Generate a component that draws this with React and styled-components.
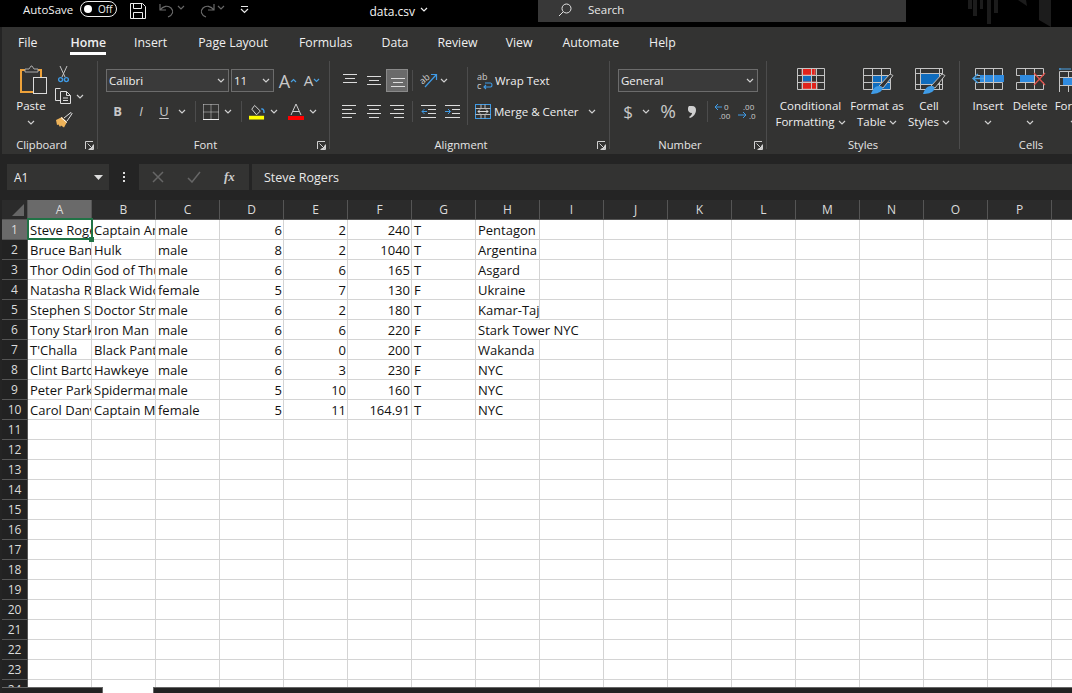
import React from "react";
import styled, { createGlobalStyle } from "styled-components";

const UI = `"Open Sans", "Noto Sans", "Liberation Sans", sans-serif`;

const Global = createGlobalStyle`
  html, body { margin: 0; padding: 0; background: #222; }
  * { box-sizing: border-box; }
`;

const Window = styled.div`
  width: 1072px; height: 693px; overflow: hidden; display: flex; flex-direction: column;
  background: #242424; font-family: ${UI}; color: #ececec; font-size: 12px;
`;
const TitleBar = styled.header`
  flex: none; height: 27px; background: #000; display: flex; align-items: flex-start; overflow: hidden;
`;
const AutoSave = styled.span`margin: 2px 0 0 23px; width: 57px; font-size: 11.5px; line-height: 16px; color: #f2f2f2;`;
const Toggle = styled.span`
  width: 38px; height: 16px; margin-top: 1px; border: 1px solid #eee; border-radius: 8px; display: flex; align-items: center; padding: 0 4px 0 3px; justify-content: space-between;
  font-size: 10px; color: #eee;
  &::before { content: ""; width: 8px; height: 8px; border-radius: 50%; background: #fff; }
`;
const QatSlot = styled.span`flex: none; width: ${p => p.$w}px; margin: ${p => p.$t ?? 3}px 0 0 ${p => p.$l ?? 0}px; display: flex; justify-content: center;`;
const FileName = styled.span`margin: 3px 0 0 ${p => p.$l}px; font-size: 12px; line-height: 17px; color: #f4f4f4;`;
const SearchBox = styled.div`
  flex: none; width: 368px; height: 22px; margin-left: 108px; background: #383838; display: flex; align-items: center; padding: 0 0 3px 20px; gap: 16px; font-size: 11.5px; color: #e8e8e8;
`;
const Deco = styled.svg`flex: none; margin-left: 54px;`;

const Chrome = styled.div`flex: none; margin-left: 2px; background: #333332;`;
const Tabs = styled.nav`display: flex; height: 33px; padding-left: 16px;`;
const Tab = styled.span`
  margin-left: ${p => p.$l}px; height: 28px; padding-top: 7px; line-height: 17px; font-size: 12.3px; white-space: nowrap; color: #efefef;
  font-weight: ${p => p.$on ? 600 : 400};
  border-bottom: ${p => p.$on ? "3px solid #fff" : "none"};
`;
const Ribbon = styled.div`display: flex; height: 94px; padding: 1px 0 5px; overflow: hidden;`;
const Group = styled.section`
  flex: none; width: ${p => p.$w}px; display: flex; flex-direction: column; border-right: 1px solid #4c4c4c;
  &:last-child { border-right: 0; }
`;
const GroupBody = styled.div`flex: none; height: 77px; padding-left: ${p => p.$pad ?? 0}px; display: flex;`;
const Caption = styled.footer`
  flex: none; height: 11px; line-height: 14px; font-size: 11.2px; color: #e6e6e6; text-align: center; position: relative; padding-right: ${p => p.$shift ?? 0}px;
`;
const Launcher = styled.svg`position: absolute; right: 3px; top: 3px;`;
const Stack = styled.div`display: flex; flex-direction: column; padding-top: ${p => p.$top ?? 8}px; width: ${p => p.$w ? p.$w + "px" : "auto"};`;
const Row = styled.div`display: flex; align-items: center; height: 23px; margin-bottom: ${p => p.$gap ?? 8}px;`;
const Slot = styled.span`
  flex: none; display: flex; align-items: center; justify-content: center; height: 23px; width: ${p => p.$w}px; margin-left: ${p => p.$l ?? 0}px;
  background: ${p => p.$on ? "#6a6a6a" : "transparent"}; border: ${p => p.$on ? "1px solid #8a8a8a" : "none"};
`;
const Glyph = styled.span`font-size: ${p => p.$s ?? 13}px; font-weight: ${p => p.$b ? 700 : 400}; font-style: ${p => p.$i ? "italic" : "normal"}; color: #c8c8c8; line-height: 1; font-family: ${UI}; text-decoration: ${p => p.$u ? "underline" : "none"}; text-underline-offset: 2px;`;
const Combo = styled.div`
  flex: none; width: ${p => p.$w}px; height: 23px; margin-left: ${p => p.$l ?? 0}px; background: #3a3a3a; border: 1px solid #6c6c6c; display: flex; align-items: center; justify-content: space-between; padding: 0 3px 0 2px; font-size: 11.5px; color: #f0f0f0;
`;
const RowSep = styled.span`flex: none; width: 1px; height: 21px; background: #4c4c4c; margin-left: ${p => p.$l}px;`;
const TallSep = styled.span`flex: none; width: 1px; height: 58px; margin-top: 6px; background: #4c4c4c;`;
const TextAction = styled.span`font-size: 11.5px; color: #efefef; margin-left: ${p => p.$l}px; white-space: nowrap;`;
const PasteCol = styled.div`flex: none; width: 32px; display: flex; flex-direction: column; align-items: center; padding-top: 3px;`;
const PasteGlyph = styled.span`display: block; margin-left: 8px; height: 31px;`;
const PasteLabel = styled.span`margin-top: 3px; line-height: 16px; font-size: 11.5px; color: #efefef;`;
const PasteChev = styled.span`display: flex; height: 16px; align-items: center;`;
const SmallCol = styled.div`flex: none; display: flex; flex-direction: column; margin-left: 8px; padding-top: 3px;`;
const SmallRow = styled.div`display: flex; align-items: center; height: ${p => p.$h}px; gap: 4px; padding-left: ${p => p.$l ?? 0}px;`;
const Big = styled.div`flex: none; width: ${p => p.$w}px; display: flex; flex-direction: column; align-items: center; padding-top: 7px;`;
const BigIcon = styled.div`height: 23px; margin: 0 0 7px ${p => p.$l ?? 0}px;`;
const BigLabel = styled.span`line-height: 16px; font-size: 11.5px; color: #efefef; white-space: nowrap; display: flex; align-items: center; gap: 3px; height: 16px;`;

const FormulaBar = styled.div`flex: none; display: flex; align-items: stretch; height: 26px; margin: 10px 0 10px 7px;`;
const Box = styled.div`background: #333332; display: flex; align-items: center;`;
const NameBox = styled(Box)`width: 102px; justify-content: space-between; padding: 0 6px 0 7px; font-size: 12px;`;
const Dots = styled.span`width: 30px; display: flex; flex-direction: column; align-items: center; justify-content: center; gap: 2px; i { width: 2px; height: 2px; background: #ddd; display: block; }`;
const FxBox = styled(Box)`width: 110px; padding-left: 13px; gap: 23px;`;
const FxLabel = styled.span`font-family: "Liberation Serif", serif; font-style: italic; font-size: 13px; font-weight: 700; color: #ccc;`;
const Input = styled(Box)`flex: 1; margin-left: 3px; padding-left: 12px; font-size: 12.5px; color: #e8e8e8;`;

const Sheet = styled.div`flex: 1; min-height: 0; margin-left: 2px; overflow: hidden;`;
const GridRow = styled.div`display: grid; grid-template-columns: 26px repeat(17, 64px); height: 20px;`;
const HeadCell = styled.div`
  background: ${p => p.$on ? "#6a6a6a" : "#2b2b2b"}; border-right: 1px solid #555; border-bottom: 1px solid #555; display: flex; align-items: center; justify-content: center; font-size: 12px; color: #dcdcdc; line-height: 1;
`;
const Corner = styled(HeadCell)`position: relative; &::after { content: ""; position: absolute; right: 3px; bottom: 3px; border-style: solid; border-width: 0 0 12px 12px; border-color: transparent transparent #666 transparent; }`;
const RowHead = styled(HeadCell)`background: ${p => p.$on ? "#6a6a6a" : "#222"}; padding-top: 1px;`;
const Cell = styled.div`
  background: #fff; border-right: 1px solid #d4d4d4; border-bottom: 1px solid #d4d4d4; color: #111; font-size: 13px; line-height: 20px; white-space: nowrap; overflow: hidden; padding: 0 1px 0 2px;
  text-align: ${p => p.$num ? "right" : "left"};
  grid-column: span ${p => p.$span ?? 1};
`;
const SelectedFrame = styled.div`
  position: absolute; z-index: 2; left: 25px; top: -2px; width: 66px; height: 22px; border: 2px solid #217346; pointer-events: none;
  &::after { content: ""; position: absolute; right: -3px; bottom: -4px; width: 5px; height: 5px; background: #217346; }
`;
const Body = styled.div`position: relative;`;
const SheetTabs = styled.div`flex: none; height: 6px; background: #fff; display: flex; margin-left: 2px; justify-content: space-between;`;
const TabStrip = styled.span`background: #222; border-top: 1px solid #666; height: 6px; width: ${p => p.$w}px; ${p => p.$side}: 1px solid #666;`;

const Chev = ({ c = "#cfcfcf" }) => <svg width="8" height="5" viewBox="0 0 8 5"><path d="M1 1l3 3 3-3" fill="none" stroke={c} strokeWidth="1.2" /></svg>;
const Lines = ({ rows, w = 16, h = 15 }) => (
  <svg width={w} height={h} viewBox={`0 0 ${w} ${h}`}>
    {rows.map(([a, b, y], i) => <path key={i} d={`M${a} ${y}.5H${b}`} stroke="#dcdcdc" />)}
  </svg>
);
const LaunchIcon = () => <Launcher width="9" height="9" viewBox="0 0 9 9"><path d="M.5 8V.5H8M8.5 3.5v5h-5M2.5 2.5l5 5M4.5 7.5h3v-3" fill="none" stroke="#d0d0d0" /></Launcher>;

const SaveIcon = () => <svg width="16" height="16" viewBox="0 0 16 16"><path d="M.5.5h12l3 3v12H.5zM3.5.5v5h8v-5M3.5 15.5v-6h9v6" fill="none" stroke="#eee" /></svg>;
const Undo = () => <svg width="16" height="15" viewBox="0 0 16 15"><path d="M1 1v6h6M1 7c3-4 8-5 11-2 3 3 2 7-3 9" fill="none" stroke="#6a6a6a" strokeWidth="1.2" /></svg>;
const Redo = () => <svg width="16" height="15" viewBox="0 0 16 15"><path d="M15 1v6H9M15 7C12 3 7 2 4 5c-3 3-2 7 3 9" fill="none" stroke="#6a6a6a" strokeWidth="1.2" /></svg>;
const Customize = () => <svg width="9" height="8" viewBox="0 0 9 8"><path d="M1 .5h7M1 3l3.5 3.5L8 3" fill="none" stroke="#e8e8e8" strokeWidth="1.2" /></svg>;
const SearchIcon = () => <svg width="14" height="14" viewBox="0 0 14 14"><circle cx="8.5" cy="5.5" r="4.5" fill="none" stroke="#e4e4e4" /><path d="M5.2 8.8L1 13" stroke="#e4e4e4" /></svg>;

const PasteIcon = () => (
  <svg width="30" height="31" viewBox="0 0 30 31">
    <path d="M5 6H1v22h12M17 6h4v7" fill="none" stroke="#eea23a" strokeWidth="2" />
    <path d="M5 8V5h4l2-3h1l2 3h4v3z" fill="#333" stroke="#aaa" />
    <rect x="13.5" y="13.5" width="13" height="16" fill="none" stroke="#dcdcdc" />
  </svg>
);
const CutIcon = () => (
  <svg width="11" height="17" viewBox="0 0 11 17">
    <path d="M2 0l5 11M9 0L4 11" stroke="#c4c4c4" fill="none" />
    <circle cx="2.6" cy="13.6" r="2" fill="none" stroke="#3f9be6" strokeWidth="1.4" />
    <circle cx="8.4" cy="13.6" r="2" fill="none" stroke="#3f9be6" strokeWidth="1.4" />
  </svg>
);
const CopyIcon = () => (
  <svg width="17" height="16" viewBox="0 0 17 16">
    <path d="M5 12.5H.5v-12h5" fill="none" stroke="#dedede" />
    <path d="M5.500 3.500h6l4 4v8h-10zM11.500 3.500v4h4M8 10h5M8 12.500h5" fill="none" stroke="#dedede" />
  </svg>
);
const BrushIcon = () => (
  <svg width="18" height="16" viewBox="0 0 18 16">
    <path d="M9 6l5-4 2-1.500 1 1L15.500 4 12 9" fill="#333" stroke="#e4e4e4" />
    <path d="M1 8l6-3 5 5-3 5.500L6 13.500 5 15 3.500 12.500 2 13z" fill="#eeb35a" />
    <path d="M6 5.500l6 5" stroke="#fff" />
  </svg>
);
const BorderIcon = () => (
  <svg width="16" height="16" viewBox="0 0 16 16">
    <path d="M.5.5h15v15M.5.500v15M.5 8h15M8 .5v15" fill="none" stroke="#d4d4d4" strokeDasharray="1 1" />
    <path d="M0 15.500h16" stroke="#eee" />
  </svg>
);
const FillIcon = () => (
  <svg width="17" height="16" viewBox="0 0 17 16">
    <path d="M6 1l6 6-4 4-5-6z" fill="none" stroke="#ddd" />
    <path d="M13 5c2-1 3 1 3 4" fill="none" stroke="#3f9be6" strokeWidth="1.5" />
    <rect x="0" y="12" width="16" height="4" fill="#ffff00" />
  </svg>
);
const ColorIcon = () => (
  <svg width="16" height="16" viewBox="0 0 16 16">
    <path d="M3 11L8 0l5 11M5 7.500h6" fill="none" stroke="#cfcfcf" />
    <rect y="12" width="16" height="4" fill="#ff0000" />
  </svg>
);
const GrowIcon = ({ down }) => (
  <svg width="7" height="5" viewBox="0 0 7 5"><path d={down ? "M1 1l2.500 2.500L6 1" : "M1 4l2.500-2.500L6 4"} fill="none" stroke="#4aa0e0" strokeWidth="1.200" /></svg>
);
const Orient = () => (
  <svg width="18" height="17" viewBox="0 0 18 17">
    <text x="0" y="10" fontSize="9" fill="#ccc" fontFamily="Open Sans" transform="rotate(-40 5 8)">ab</text>
    <path d="M5 15L16 3M11 2.500h5.500V8" fill="none" stroke="#3f9be6" strokeWidth="1.200" />
  </svg>
);
const IndentIcon = ({ right }) => (
  <svg width="15" height="13" viewBox="0 0 15 13">
    <path d="M0 .5h15M7 4.500h8M7 8.500h8M0 12.500h15" stroke="#dcdcdc" />
    {right
      ? <path d="M0 6.500h5M3 4l2.500 2.500L3 9" fill="none" stroke="#3f9be6" />
      : <path d="M6 6.500H1M3.500 4L1 6.500 3.500 9" fill="none" stroke="#3f9be6" />}
  </svg>
);
const WrapIcon = () => (
  <svg width="16" height="18" viewBox="0 0 16 18">
    <text x="0" y="8" fontSize="9" fill="#ccc" fontFamily="Open Sans">ab</text>
    <text x="0" y="17" fontSize="9" fill="#ccc" fontFamily="Open Sans">c</text>
    <path d="M8 11h5.500c2 0 2 4 0 4H7M9 13l-2 2 2 2" fill="none" stroke="#3f9be6" strokeWidth="1.100" />
  </svg>
);
const MergeIcon = () => (
  <svg width="16" height="15" viewBox="0 0 16 15">
    <rect x=".5" y=".5" width="15" height="14" fill="none" stroke="#3f9be6" />
    <path d="M.5 4.500h15M.5 10.500h15M6 .5v4M10 .5v4M6 10.500v4M10 10.500v4" stroke="#bbb" />
    <path d="M3 7.500h10M5 5.500l-2 2 2 2M11 5.500l2 2-2 2" fill="none" stroke="#dcdcdc" />
  </svg>
);
const DecIcon = ({ more }) => (
  <svg width="18" height="17" viewBox="0 0 18 17">
    {more ? <>
      <path d="M8 4H1M4 1L1 4l3 3" fill="none" stroke="#3f9be6" />
      <text x="10" y="7" fontSize="8" fill="#ccc" fontFamily="Open Sans">0</text>
      <text x="5" y="16" fontSize="8" fill="#ccc" fontFamily="Open Sans">.00</text>
    </> : <>
      <text x="5" y="7" fontSize="8" fill="#ccc" fontFamily="Open Sans">.00</text>
      <path d="M0 12h8M5 9l3 3-3 3" fill="none" stroke="#3f9be6" />
      <text x="11" y="16" fontSize="8" fill="#ccc" fontFamily="Open Sans">.0</text>
    </>}
  </svg>
);
const CommaIcon = () => <svg width="8" height="13" viewBox="0 0 8 13"><path d="M1 1h3c3 0 4 2 4 4 0 4-3 7-6 8l-1-1c2-1 3-3 3-4C1 8 0 6 0 4.500 0 3 0 2 1 1z" fill="#cfcfcf" /></svg>;

const G = "#c4c4c4";
const CondIcon = () => (
  <svg width="28" height="22" viewBox="0 0 28 22">
    <rect x="5" y="0" width="13" height="7" fill="#e0231c" stroke="#f46a60" />
    <rect x="5" y="7" width="9" height="7" fill="#0f6cbd" />
    <rect x="5" y="14" width="15" height="7" fill="#e0231c" stroke="#f46a60" />
    <path d="M.5.500h27v21H.5zM.5 7.500h27M.5 14.500h27M5.500.500v21M14.500.500v21M19.500.500v21" fill="none" stroke={G} />
  </svg>
);
const Bristle = () => (
  <g>
    <path d="M16 18L27 6l3 1.500L20 20z" fill="#333" stroke="#bdbdbd" />
    <path d="M8 26c1-3 3-8 8-8 3 0 4 2 3 4-2 3-7 4-11 4z" fill="#3f9be6" />
  </g>
);
const TableIcon = () => (
  <svg width="31" height="26" viewBox="0 0 31 26">
    <rect x="9" y="7" width="19" height="14" fill="#0f6cbd" />
    <path d="M.5.500h27v21H.5zM.5 7.500h27M.5 14.500h27M9.500.500v21M18.500.500v21" fill="none" stroke={G} />
    <Bristle />
  </svg>
);
const CellStyleIcon = () => (
  <svg width="31" height="26" viewBox="0 0 31 26">
    <rect x="5" y="5" width="19" height="12" fill="#0f6cbd" />
    <path d="M.5.500h27v21H.5zM.5 5.500h27M.5 16.500h27M5.500.500v21M24.500.500v21" fill="none" stroke={G} />
    <Bristle />
  </svg>
);
const InsertIcon = () => (
  <svg width="32" height="22" viewBox="0 0 32 22">
    <path d="M3.500.500h27v7h-27zM3.500 14.500h27v7h-27zM12.500.500v21M21.500.500v21" fill="none" stroke={G} />
    <rect x="8" y="7" width="24" height="7" fill="#2f8be0" />
    <path d="M13 10.500H2M6 6l-5 4.500L6 15" fill="none" stroke="#4aa0e0" strokeWidth="1.500" />
    <path d="M12.500 7v7M21.500 7v7" stroke={G} />
  </svg>
);
const DeleteIcon = () => (
  <svg width="30" height="22" viewBox="0 0 30 22">
    <path d="M.5.500h27v7H.5zM.5 14.500h18M27.500 14.500v7H.5v-7M9.500.500v21M18.500.500v21" fill="none" stroke={G} />
    <rect x="4" y="7" width="14" height="7" fill="#2f8be0" />
    <path d="M18 5l11 12M29 5L18 17" stroke="#e0524c" strokeWidth="1.300" />
  </svg>
);
const FormatIcon = () => (
  <svg width="30" height="24" viewBox="0 0 30 24">
    <path d="M0 1h12M1 0v2" stroke="#4aa0e0" />
    <path d="M.5 3.500h27v21H.5zM.5 9.500h27M.5 17.500h27M9.500 3.500v21" fill="none" stroke={G} />
    <rect x="4" y="10" width="24" height="7" fill="#2f8be0" />
  </svg>
);
const XIcon = () => <svg width="12" height="12" viewBox="0 0 12 12"><path d="M1 1l10 10M11 1L1 11" stroke="#666" strokeWidth="1.500" /></svg>;
const CheckIcon = () => <svg width="14" height="12" viewBox="0 0 14 12"><path d="M1 7l4 4 8-10" fill="none" stroke="#666" strokeWidth="1.500" /></svg>;
const NameCaret = () => <svg width="9" height="5" viewBox="0 0 9 5"><path d="M0 0h9L4.500 5z" fill="#ddd" /></svg>;

const tabs = [["File", 0], ["Home", 33, true], ["Insert", 28], ["Page Layout", 31], ["Formulas", 31], ["Data", 29], ["Review", 29], ["View", 28], ["Automate", 30], ["Help", 30]];
const letters = "ABCDEFGHIJKLMNOPQ".split("");
const data = [
  ["Steve Rogers", "Captain America", "male", 6, 2, 240, "T", "Pentagon"],
  ["Bruce Banner", "Hulk", "male", 8, 2, 1040, "T", "Argentina"],
  ["Thor Odinson", "God of Thunder", "male", 6, 6, 165, "T", "Asgard"],
  ["Natasha Romanoff", "Black Widow", "female", 5, 7, 130, "F", "Ukraine"],
  ["Stephen Strange", "Doctor Strange", "male", 6, 2, 180, "T", "Kamar-Taj"],
  ["Tony Stark", "Iron Man", "male", 6, 6, 220, "F", "Stark Tower NYC"],
  ["T'Challa", "Black Panther", "male", 6, 0, 200, "T", "Wakanda"],
  ["Clint Barton", "Hawkeye", "male", 6, 3, 230, "F", "NYC"],
  ["Peter Parker", "Spiderman", "male", 5, 10, 160, "T", "NYC"],
  ["Carol Danvers", "Captain Marvel", "female", 5, 11, 164.91, "T", "NYC"],
];

const LINES_T = [[1, 15, 1], [3, 13, 5], [1, 15, 9]];
const LINES_M = [[1, 15, 3], [3, 13, 7], [1, 15, 11]];
const LINES_B = [[2, 16, 5], [4, 14, 9], [2, 16, 13]];
const AL = [[0, 14, 1], [0, 10, 5], [0, 14, 9], [0, 10, 13]];
const AC = [[1, 15, 1], [3, 13, 5], [1, 15, 9], [3, 13, 13]];
const AR = [[1, 15, 1], [5, 15, 5], [1, 15, 9], [5, 15, 13]];

export default function App() {
  const rows = Array.from({ length: 24 }, (_, i) => i);
  return (
    <Window>
      <Global />
      <TitleBar>
        <AutoSave>AutoSave</AutoSave>
        <Toggle>Off</Toggle>
        <QatSlot $w={16} $l={13}><SaveIcon /></QatSlot>
        <QatSlot $w={16} $l={13}><Undo /></QatSlot>
        <QatSlot $w={12} $t={5}><Chev c="#666" /></QatSlot>
        <QatSlot $w={16} $l={12}><Redo /></QatSlot>
        <QatSlot $w={12} $t={5}><Chev c="#666" /></QatSlot>
        <QatSlot $w={10} $l={12} $t={6}><Customize /></QatSlot>
        <FileName $l={120}>data.csv</FileName>
        <QatSlot $w={12} $l={3} $t={7}><Chev c="#eee" /></QatSlot>
        <SearchBox><SearchIcon /><span>Search</span></SearchBox>
        <Deco width="112" height="27" viewBox="0 0 112 27">
          <path d="M8 0h4v9H8zM13 0h4v16h-4zM20 0h3v9h-3zM27 0h4v24h-4zM34 0h4v13h-4zM58 0h8l1 6zM79 0h12v27l-12-7z" fill="#1c1c1c" />
        </Deco>
      </TitleBar>
      <Chrome>
        <Tabs>
          {tabs.map(([t, l, on]) => <Tab key={t} $l={l} $on={on}>{t}</Tab>)}
        </Tabs>
        <Ribbon>
          <Group $w={96}>
            <GroupBody $pad={13}>
              <PasteCol>
                <PasteGlyph><PasteIcon /></PasteGlyph>
                <PasteLabel>Paste</PasteLabel>
                <PasteChev><Chev /></PasteChev>
              </PasteCol>
              <SmallCol>
                <SmallRow $h={20} $l={3}><CutIcon /></SmallRow>
                <SmallRow $h={24}><CopyIcon /><Chev /></SmallRow>
                <SmallRow $h={23}><BrushIcon /></SmallRow>
              </SmallCol>
            </GroupBody>
            <Caption $shift={16}>Clipboard<LaunchIcon /></Caption>
          </Group>
          <Group $w={232}>
            <GroupBody $pad={8}>
              <Stack>
                <Row>
                  <Combo $w={123}>Calibri<Chev /></Combo>
                  <Combo $w={43} $l={2}>11<Chev /></Combo>
                  <Slot $w={22} $l={3}><Glyph $s={18}>A</Glyph><GrowIcon /></Slot>
                  <Slot $w={22} $l={2}><Glyph $s={15}>A</Glyph><GrowIcon down /></Slot>
                </Row>
                <Row>
                  <Slot $w={23}><Glyph $b>B</Glyph></Slot>
                  <Slot $w={24}><Glyph $i>I</Glyph></Slot>
                  <Slot $w={22}><Glyph $u>U</Glyph></Slot>
                  <Slot $w={14}><Chev /></Slot>
                  <RowSep $l={6} />
                  <Slot $w={16} $l={7}><BorderIcon /></Slot>
                  <Slot $w={18}><Chev /></Slot>
                  <RowSep $l={4} />
                  <Slot $w={16} $l={7}><FillIcon /></Slot>
                  <Slot $w={18}><Chev /></Slot>
                  <Slot $w={16} $l={5}><ColorIcon /></Slot>
                  <Slot $w={18}><Chev /></Slot>
                </Row>
              </Stack>
            </GroupBody>
            <Caption $shift={16}>Font<LaunchIcon /></Caption>
          </Group>
          <Group $w={280}>
            <GroupBody $pad={9}>
              <Stack $w={128}>
                <Row>
                  <Slot $w={22}><Lines rows={LINES_T} /></Slot>
                  <Slot $w={25}><Lines rows={LINES_M} /></Slot>
                  <Slot $w={22} $on><Lines rows={LINES_B} w={17} /></Slot>
                  <RowSep $l={4} />
                  <Slot $w={18} $l={7}><Orient /></Slot>
                  <Slot $w={12}><Chev /></Slot>
                </Row>
                <Row>
                  <Slot $w={22}><Lines rows={AL} /></Slot>
                  <Slot $w={25}><Lines rows={AC} /></Slot>
                  <Slot $w={22}><Lines rows={AR} /></Slot>
                  <RowSep $l={4} />
                  <Slot $w={15} $l={8}><IndentIcon /></Slot>
                  <Slot $w={15} $l={9}><IndentIcon right /></Slot>
                </Row>
              </Stack>
              <TallSep />
              <Stack>
                <Row>
                  <Slot $w={16} $l={9}><WrapIcon /></Slot>
                  <TextAction $l={2}>Wrap Text</TextAction>
                </Row>
                <Row>
                  <Slot $w={16} $l={7}><MergeIcon /></Slot>
                  <TextAction $l={3}>Merge &amp; Center</TextAction>
                  <Slot $w={12} $l={7}><Chev /></Slot>
                </Row>
              </Stack>
            </GroupBody>
            <Caption $shift={17}>Alignment<LaunchIcon /></Caption>
          </Group>
          <Group $w={157}>
            <GroupBody $pad={8}>
              <Stack>
                <Row><Combo $w={140}>General<Chev /></Combo></Row>
                <Row>
                  <Slot $w={20}><Glyph $s={17}>$</Glyph></Slot>
                  <Slot $w={16}><Chev /></Slot>
                  <Slot $w={28}><Glyph $s={19}>%</Glyph></Slot>
                  <Slot $w={20}><CommaIcon /></Slot>
                  <RowSep $l={5} />
                  <Slot $w={18} $l={6}><DecIcon more /></Slot>
                  <Slot $w={18} $l={6}><DecIcon /></Slot>
                </Row>
              </Stack>
            </GroupBody>
            <Caption $shift={16}>Number<LaunchIcon /></Caption>
          </Group>
          <Group $w={193}>
            <GroupBody $pad={6}>
              <Big $w={75}>
                <BigIcon><CondIcon /></BigIcon>
                <BigLabel>Conditional</BigLabel>
                <BigLabel>Formatting <Chev /></BigLabel>
              </Big>
              <Big $w={58}>
                <BigIcon $l={2}><TableIcon /></BigIcon>
                <BigLabel>Format as</BigLabel>
                <BigLabel>Table <Chev /></BigLabel>
              </Big>
              <Big $w={46}>
                <BigIcon $l={2}><CellStyleIcon /></BigIcon>
                <BigLabel>Cell</BigLabel>
                <BigLabel>Styles <Chev /></BigLabel>
              </Big>
            </GroupBody>
            <Caption>Styles</Caption>
          </Group>
          <Group $w={142}>
            <GroupBody $pad={8}>
              <Big $w={40}>
                <BigIcon><InsertIcon /></BigIcon>
                <BigLabel>Insert</BigLabel>
                <BigLabel><Chev /></BigLabel>
              </Big>
              <Big $w={44}>
                <BigIcon $l={2}><DeleteIcon /></BigIcon>
                <BigLabel>Delete</BigLabel>
                <BigLabel><Chev /></BigLabel>
              </Big>
              <Big $w={44}>
                <BigIcon><FormatIcon /></BigIcon>
                <BigLabel>Format</BigLabel>
                <BigLabel><Chev /></BigLabel>
              </Big>
            </GroupBody>
            <Caption>Cells</Caption>
          </Group>
        </Ribbon>
      </Chrome>
      <FormulaBar>
        <NameBox>A1<NameCaret /></NameBox>
        <Dots><i /><i /><i /></Dots>
        <FxBox><XIcon /><CheckIcon /><FxLabel>fx</FxLabel></FxBox>
        <Input>Steve Rogers</Input>
      </FormulaBar>
      <Sheet>
        <GridRow>
          <Corner />
          {letters.map(l => <HeadCell key={l} $on={l === "A"}>{l === "Q" ? "" : l}</HeadCell>)}
        </GridRow>
        <Body>
          <SelectedFrame />
          {rows.map(r => {
            const d = data[r];
            const span = d && r === 5;
            return (
              <GridRow key={r}>
                <RowHead $on={r === 0}>{r + 1}</RowHead>
                {letters.slice(0, 8).map((l, c) => (
                  <Cell key={l} $num={d && typeof d[c] === "number"} $span={span && c === 7 ? 2 : 1}>{d ? d[c] : ""}</Cell>
                ))}
                {letters.slice(span ? 9 : 8).map(l => <Cell key={l} />)}
              </GridRow>
            );
          })}
        </Body>
      </Sheet>
      <SheetTabs>
        <TabStrip $w={101} $side="border-right" />
        <TabStrip $w={919} $side="border-left" />
      </SheetTabs>
    </Window>
  );
}
